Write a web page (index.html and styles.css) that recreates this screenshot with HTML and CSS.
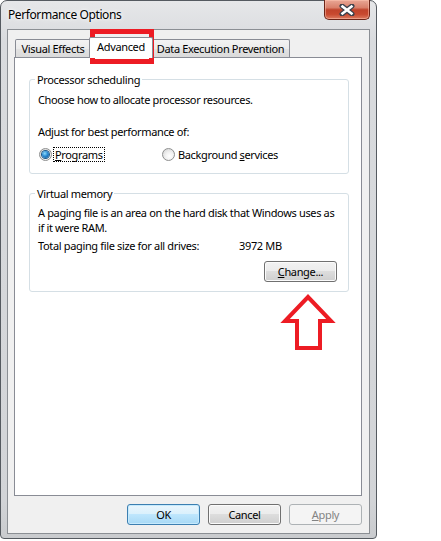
FILE: index.html
```html
<!DOCTYPE html>
<html>
<head>
<meta charset="utf-8">
<link rel="stylesheet" href="styles.css">
</head>
<body>
<div class="window">
  <div class="titlebar">
    <span class="title">Performance Options</span>
    <div class="close">
      <svg width="16" height="12" viewBox="0 0 16 12">
        <path d="M3 2 L13 10 M13 2 L3 10" stroke="#3a3f4a" stroke-width="5" stroke-linecap="round"/>
        <path d="M3.5 2.5 L12.5 9.5 M12.5 2.5 L3.5 9.5" stroke="#fff" stroke-width="2.6" stroke-linecap="square"/>
      </svg>
    </div>
  </div>
  <div class="client">
    <div class="tabs">
      <div class="tab t1">Visual Effects</div>
      <div class="tab t2 active">Advanced</div>
      <div class="tab t3">Data Execution Prevention</div>
    </div>
    <div class="panel">
      <fieldset class="group g1">
        <legend>Processor scheduling</legend>
        <div class="line">Choose how to allocate processor resources.</div>
        <div class="line adjust">Adjust for best performance of:</div>
        <div class="radios">
          <label class="radio r1"><span class="dot checked"></span><span class="rtext focus"><u>P</u>rograms</span></label>
          <label class="radio"><span class="dot"></span><span class="rtext">Background <u>s</u>ervices</span></label>
        </div>
      </fieldset>
      <fieldset class="group g2">
        <legend>Virtual memory</legend>
        <div class="line">A paging file is an area on the hard disk that Windows uses as</div>
        <div class="line">if it were RAM.</div>
        <div class="line total"><span class="tlabel">Total paging file size for all drives:</span><span>3972 MB</span></div>
        <div class="changerow"><button class="btn change"><u>C</u>hange...</button></div>
      </fieldset>
    </div>
    <div class="buttons">
      <button class="btn ok">OK</button>
      <button class="btn">Cancel</button>
      <button class="btn disabled"><u>A</u>pply</button>
    </div>
  </div>
</div>
<div class="annot-box"></div>
<svg class="annot-arrow" width="60" height="66" viewBox="0 0 60 66">
  <polygon points="28,7 51,31 40,31 40,58 17,58 17,31 5,31" fill="none" stroke="#ed1c24" stroke-width="4" stroke-linejoin="miter"/>
</svg>
</body>
</html>
```
FILE: styles.css
```css
body {
  margin: 0;
  background: #ffffff;
  font-family: "Noto Sans", "Open Sans", sans-serif;
  font-size: 11px;
  letter-spacing: -0.35px;
  color: #000;
}

.window {
  width: 377px;
  height: 539px;
  box-sizing: border-box;
  border: 1px solid #555a60;
  border-radius: 7px 7px 4px 4px;
  background: linear-gradient(#e6e7e9, #d9dbde 40px, #d2d4d7 500px, #c9cbce);
  display: flex;
  flex-direction: column;
}

.titlebar {
  height: 28px;
  display: flex;
  align-items: flex-start;
}

.title {
  padding: 6px 0 0 7px;
  line-height: 15px;
  font-size: 12px;
  letter-spacing: -0.4px;
  text-shadow: 0 0 6px #fff, 0 0 3px #fff;
}

.close {
  margin: -1px 6px 0 auto;
  width: 46px;
  height: 20px;
  box-sizing: border-box;
  border: 1px solid #6b2418;
  border-top: none;
  border-radius: 0 0 5px 5px;
  background: linear-gradient(#e9a796, #d9806b 40%, #c0432b 52%, #c8492f 75%, #dc7a60);
  box-shadow: inset 0 0 0 1px rgba(255, 200, 180, 0.5);
  display: flex;
  align-items: center;
  justify-content: center;
}

.client {
  margin: 0 6px;
  height: 505px;
  box-sizing: border-box;
  border: 1px solid #8b8f94;
  background: #f0f0f0;
  padding: 0 7px 8px 6px;
  display: flex;
  flex-direction: column;
}

.tabs {
  height: 27px;
  display: flex;
  align-items: flex-end;
  padding-left: 1px;
}

.tab {
  height: 18px;
  box-sizing: border-box;
  border: 1px solid #898c95;
  border-bottom: none;
  border-radius: 2px 2px 0 0;
  background: linear-gradient(#f3f3f3, #ebebeb 50%, #e3e3e3 50%, #dadada);
  line-height: 17px;
  text-align: center;
  white-space: nowrap;
}

.t1 { width: 76px; }
.t2 { width: 60px; }
.t3 { width: 139px; }

.tab.active {
  width: 64px;
  height: 21px;
  margin: 0 -2px -1px;
  background: #fff;
  padding-bottom: 3px;
  position: relative;
  z-index: 1;
}

.panel {
  height: 439px;
  box-sizing: border-box;
  border: 1px solid #898c95;
  background: #fff;
  padding: 0 14px;
}

.group {
  width: 320px;
  box-sizing: border-box;
  margin: 0;
  border: 1px solid #d5dfe5;
  border-radius: 3px;
  padding: 5px 8px 11px 8px;
  min-width: 0;
}

.g1 { margin-top: 14px; }
.g2 { margin-top: 12px; padding-top: 4px; padding-bottom: 9px; }

.group legend {
  padding: 0 2px;
  margin-left: -3px;
  line-height: 15px;
}

.line {
  line-height: 15px;
  white-space: nowrap;
}

.adjust { margin-top: 17px; }

.radios {
  margin-top: 8px;
  padding-left: 1px;
  display: flex;
  align-items: center;
  height: 15px;
}

.radio {
  display: flex;
  align-items: center;
  white-space: nowrap;
}

.r1 { width: 123px; }

.dot {
  width: 13px;
  height: 13px;
  box-sizing: border-box;
  border-radius: 50%;
  border: 1px solid #8e8f8f;
  background: radial-gradient(circle at 60% 65%, #ffffff 0, #f2f2f2 40%, #cfcfcf 100%);
  margin-right: 1px;
  display: flex;
  align-items: center;
  justify-content: center;
}

.dot.checked::after {
  content: "";
  width: 7px;
  height: 7px;
  border-radius: 50%;
  background: radial-gradient(circle at 40% 35%, #8fdcfa 0, #2a8ad4 45%, #0b4f86 100%);
  box-shadow: 0 0 0 1px #1d5a8a;
}

.rtext {
  padding: 0 1px;
  border: 1px solid transparent;
  line-height: 13px;
}

.rtext.focus {
  border: 1px dotted #000;
}

.total {
  margin-top: 3px;
  display: flex;
}

.tlabel { width: 201px; }

.changerow {
  margin-top: 8px;
  display: flex;
  justify-content: flex-end;
  padding-right: 3px;
}

.btn {
  width: 73px;
  height: 21px;
  box-sizing: border-box;
  border: 1px solid #707070;
  border-radius: 3px;
  background: linear-gradient(#f2f2f2, #ebebeb 50%, #dddddd 50%, #cfcfcf);
  box-shadow: inset 0 0 0 1px #fbfbfb;
  font-family: inherit;
  font-size: 11px;
  letter-spacing: -0.35px;
  color: #000;
  padding: 0;
  line-height: 17px;
}

.btn.ok {
  border-color: #3c7fb1;
  background: linear-gradient(#eaf6fd, #d9f0fc 50%, #bee6fd 50%, #a7d9f5);
  box-shadow: inset 0 0 0 1px #c6eafd;
}

.btn.disabled {
  border-color: #adb2b5;
  background: #f4f4f4;
  box-shadow: none;
  color: #838383;
}

.buttons {
  margin-top: 8px;
  display: flex;
  justify-content: flex-end;
  gap: 8px;
}

.annot-box {
  position: absolute;
  left: 90px;
  top: 29px;
  width: 64px;
  height: 35px;
  box-sizing: border-box;
  border: 5px solid #ed1c24;
}

.annot-arrow {
  position: absolute;
  left: 280px;
  top: 290px;
}
```
